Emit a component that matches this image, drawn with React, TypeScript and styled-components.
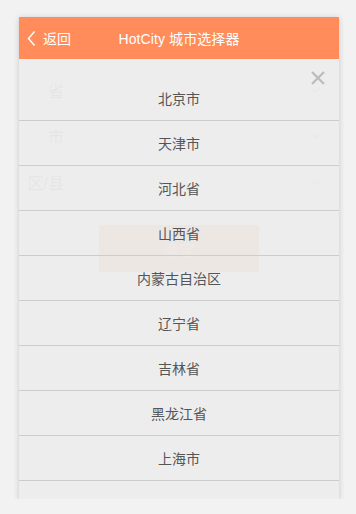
import React from 'react'
import styled, { createGlobalStyle } from 'styled-components'

const PROVINCES = [
  '北京市',
  '天津市',
  '河北省',
  '山西省',
  '内蒙古自治区',
  '辽宁省',
  '吉林省',
  '黑龙江省',
  '上海市',
]

const FIELDS = ['省', '市', '区/县']

const GlobalStyle = createGlobalStyle`
  html, body {
    margin: 0;
    padding: 0;
    background: #f2f2f2;
    font-family: "Liberation Sans", "Noto Sans CJK SC", sans-serif;
  }
`

const Page = styled.div`
  padding: 17px 0 0 19px;
`

const Card = styled.div`
  position: relative;
  width: 320px;
  height: 482px;
  background: #fff;
  box-shadow: 0 1px 6px rgba(0, 0, 0, 0.18);
`

const Header = styled.header`
  position: relative;
  display: flex;
  align-items: center;
  justify-content: center;
  height: 42px;
  background: #ff8c5a;
  color: #fff;
  font-size: 14px;
`

const Back = styled.div`
  position: absolute;
  left: 8px;
  top: 0;
  bottom: 0;
  display: flex;
  align-items: center;
  gap: 7px;
`

const Title = styled.div`
  letter-spacing: 0.1px;
`

const Form = styled.div`
  padding: 14px 10px 0 0;
  display: flex;
  flex-direction: column;
  gap: 12px;
`

const Row = styled.div`
  display: flex;
  align-items: center;
`

const Label = styled.label`
  width: 45px;
  margin-right: 22px;
  text-align: right;
  font-size: 16px;
  color: #666;
`

const Select = styled.div`
  flex: 1;
  height: 34px;
  box-sizing: border-box;
  border: 1px solid #e0e0e0;
  display: flex;
  align-items: center;
  justify-content: flex-end;
  padding-right: 8px;
  color: #aaa;
`

const Submit = styled.button`
  align-self: center;
  margin: 14px 0 0 10px;
  width: 160px;
  height: 47px;
  border: none;
  background: #ff8c5a;
  color: #ffb896;
  font-size: 16px;
  font-family: inherit;
`

const Overlay = styled.div`
  position: absolute;
  top: 42px;
  left: 0;
  right: 0;
  bottom: 0;
  background: rgba(236, 236, 236, 0.95);
  padding-top: 17px;
`

const Close = styled.div`
  position: absolute;
  top: 12px;
  right: 14px;
  line-height: 0;
`

const List = styled.ul`
  list-style: none;
  margin: 0;
  padding: 0;
`

const Item = styled.li`
  height: 44px;
  border-bottom: 1px solid #cdcdcd;
  display: flex;
  align-items: center;
  justify-content: center;
  font-size: 14px;
  color: #555;
`

const Chevron = () => (
  <svg width="10" height="6" viewBox="0 0 10 6">
    <path d="M1 1l4 4 4-4" fill="none" stroke="currentColor" strokeWidth="1.4" />
  </svg>
)

const App = () => (
  <Page>
    <GlobalStyle />
    <Card>
      <Header>
        <Back>
          <svg width="9" height="17" viewBox="0 0 9 17">
            <path d="M7.5 1.5L1.5 8.5l6 7" fill="none" stroke="#fff" strokeWidth="1.5" />
          </svg>
          <span>返回</span>
        </Back>
        <Title>HotCity 城市选择器</Title>
      </Header>
      <Form>
        {FIELDS.map((f) => (
          <Row key={f}>
            <Label>{f}</Label>
            <Select>
              <Chevron />
            </Select>
          </Row>
        ))}
        <Submit>确定</Submit>
      </Form>
      <Overlay>
        <Close>
          <svg width="14" height="14" viewBox="0 0 14 14">
            <path d="M1 1l12 12M13 1L1 13" stroke="#bdbdbd" strokeWidth="2.4" />
          </svg>
        </Close>
        <List>
          {PROVINCES.map((p) => (
            <Item key={p}>{p}</Item>
          ))}
        </List>
      </Overlay>
    </Card>
  </Page>
)

export default App
